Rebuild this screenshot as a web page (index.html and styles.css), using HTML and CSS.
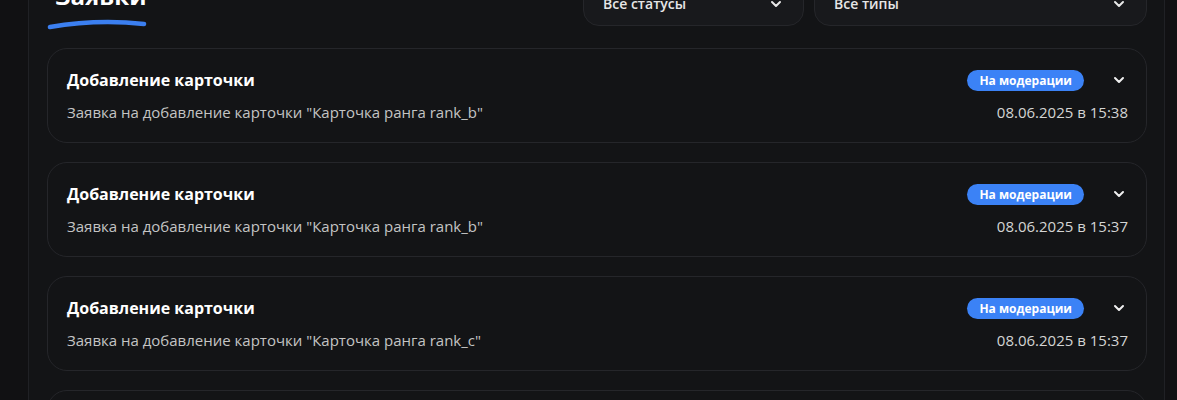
FILE: index.html
```html
<!DOCTYPE html>
<html lang="ru">
<head>
<meta charset="utf-8">
<title>Заявки</title>
<link rel="stylesheet" href="styles.css">
</head>
<body>
<main class="panel">
  <header class="header">
    <div class="heading">
      <h1 class="heading-title">Заявки</h1>
      <svg class="heading-underline" width="100" height="12" viewBox="0 0 100 12">
        <path d="M3 9 Q50 1 97 6" fill="none" stroke="#3b7ff0" stroke-width="4.5" stroke-linecap="round"/>
      </svg>
    </div>
    <div class="filters">
      <button class="select select-status">
        <span>Все статусы</span>
        <svg class="chev" width="14" height="14" viewBox="0 0 14 14"><path d="M3 5l4 4 4-4" fill="none" stroke="#e8e8e8" stroke-width="2" stroke-linecap="round" stroke-linejoin="round"/></svg>
      </button>
      <button class="select select-type">
        <span>Все типы</span>
        <svg class="chev" width="14" height="14" viewBox="0 0 14 14"><path d="M3 5l4 4 4-4" fill="none" stroke="#e8e8e8" stroke-width="2" stroke-linecap="round" stroke-linejoin="round"/></svg>
      </button>
    </div>
  </header>

  <section class="list">
    <article class="card">
      <div class="card-row">
        <h2 class="card-title">Добавление карточки</h2>
        <div class="card-actions">
          <span class="badge">На модерации</span>
          <svg class="chev toggle" width="18" height="18" viewBox="0 0 18 18"><path d="M5 7l4 4 4-4" fill="none" stroke="#f0f0f0" stroke-width="2" stroke-linecap="round" stroke-linejoin="round"/></svg>
        </div>
      </div>
      <div class="card-row">
        <p class="card-text">Заявка на добавление карточки "Карточка ранга rank_b"</p>
        <time class="card-date">08.06.2025 в 15:38</time>
      </div>
    </article>

    <article class="card">
      <div class="card-row">
        <h2 class="card-title">Добавление карточки</h2>
        <div class="card-actions">
          <span class="badge">На модерации</span>
          <svg class="chev toggle" width="18" height="18" viewBox="0 0 18 18"><path d="M5 7l4 4 4-4" fill="none" stroke="#f0f0f0" stroke-width="2" stroke-linecap="round" stroke-linejoin="round"/></svg>
        </div>
      </div>
      <div class="card-row">
        <p class="card-text">Заявка на добавление карточки "Карточка ранга rank_b"</p>
        <time class="card-date">08.06.2025 в 15:37</time>
      </div>
    </article>

    <article class="card">
      <div class="card-row">
        <h2 class="card-title">Добавление карточки</h2>
        <div class="card-actions">
          <span class="badge">На модерации</span>
          <svg class="chev toggle" width="18" height="18" viewBox="0 0 18 18"><path d="M5 7l4 4 4-4" fill="none" stroke="#f0f0f0" stroke-width="2" stroke-linecap="round" stroke-linejoin="round"/></svg>
        </div>
      </div>
      <div class="card-row">
        <p class="card-text">Заявка на добавление карточки "Карточка ранга rank_c"</p>
        <time class="card-date">08.06.2025 в 15:37</time>
      </div>
    </article>

    <article class="card">
      <div class="card-row">
        <h2 class="card-title">Добавление карточки</h2>
        <div class="card-actions">
          <span class="badge">На модерации</span>
          <svg class="chev toggle" width="18" height="18" viewBox="0 0 18 18"><path d="M5 7l4 4 4-4" fill="none" stroke="#f0f0f0" stroke-width="2" stroke-linecap="round" stroke-linejoin="round"/></svg>
        </div>
      </div>
      <div class="card-row">
        <p class="card-text">Заявка на добавление карточки "Карточка ранга rank_c"</p>
        <time class="card-date">08.06.2025 в 15:36</time>
      </div>
    </article>
  </section>
</main>
</body>
</html>
```

FILE: styles.css
```css
* { box-sizing: border-box; }

html, body {
  margin: 0;
  background: #111113;
  color: #f2f2f2;
  font-family: "Open Sans", "Noto Sans", sans-serif;
  overflow: hidden;
}

.panel {
  margin: -19px 12px 0 28px;
  padding: 0 17px 0 18px;
  border-left: 1px solid #202125;
  border-right: 1px solid #202125;
  background: #131416;
  min-height: 600px;
}

.header {
  display: flex;
  justify-content: space-between;
  align-items: flex-start;
}

.heading {
  display: flex;
  flex-direction: column;
}

.heading-title {
  margin: 0 0 0 8px;
  font-size: 24px;
  line-height: 30px;
  font-weight: 700;
  color: #ffffff;
}

.heading-underline {
  display: block;
  margin-top: 7px;
}

.filters {
  display: flex;
  gap: 10px;
}

.select {
  display: flex;
  align-items: center;
  justify-content: space-between;
  height: 45px;
  padding: 0 20px 0 19px;
  border: 1px solid #25262a;
  border-radius: 16px;
  background: #18191c;
  color: #e6e6e6;
  font: 600 14px "Open Sans", "Noto Sans", sans-serif;
}

.select-status { width: 221px; }
.select-type { width: 333px; }

.list {
  display: flex;
  flex-direction: column;
  gap: 19px;
  margin-top: 18px;
}

.card {
  display: flex;
  flex-direction: column;
  gap: 11px;
  padding: 20px 18px 20px 19px;
  border: 1px solid #25262a;
  border-radius: 20px;
  background: #131416;
}

.card-row {
  display: flex;
  align-items: center;
  justify-content: space-between;
}

.card-title {
  margin: 0;
  font-size: 16px;
  line-height: 22px;
  font-weight: 700;
  color: #ffffff;
}

.card-actions {
  display: flex;
  align-items: center;
  gap: 26px;
}

.badge {
  display: inline-flex;
  align-items: center;
  height: 21px;
  padding: 0 12px;
  border-radius: 11px;
  background: #3b82f6;
  color: #ffffff;
  font-size: 12px;
  font-weight: 700;
}

.chev { display: block; }

.card-text {
  margin: 0;
  font-size: 15px;
  line-height: 20px;
  color: #c4c4c4;
}

.card-date {
  font-size: 15px;
  line-height: 20px;
  color: #d4d4d4;
}
```
